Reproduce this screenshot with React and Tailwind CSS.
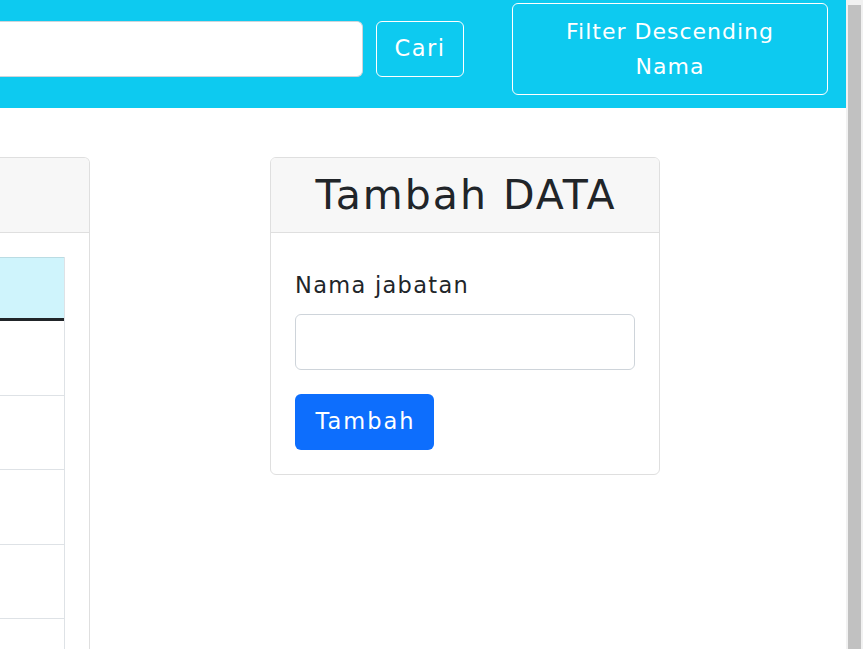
export default function App() {
  const rows = [0, 1, 2, 3];
  return (
    <div className="flex w-[863px] h-[649px] overflow-hidden bg-white text-[#212529]" style={{ fontFamily: '"DejaVu Sans", sans-serif' }}>
      <div className="w-[846px] h-[649px] flex flex-col overflow-hidden">
        {/* navbar */}
        <nav className="h-[108px] shrink-0 bg-[#0dcaf0] flex items-center pb-[11px]">
          <div className="w-[363px] h-[56px] bg-white border border-l-0 border-[#ced4da] rounded-r-[6px]"></div>
          <button className="ml-[13px] w-[88px] h-[56px] border border-white rounded-[6px] text-white text-[22.5px] tracking-[1.5px]">Cari</button>
          <button className="ml-[48px] w-[316px] h-[92px] border border-white rounded-[6px] text-white text-[22px] leading-[35px] tracking-[1px] text-center">
            Filter Descending
            <br />
            Nama
          </button>
        </nav>
        {/* content */}
        <div className="flex items-start pt-[49px]">
          {/* left card (partially visible) */}
          <div className="w-[90px] h-[600px] shrink-0 border border-l-0 border-[#dfdfdf] rounded-tr-[6px] overflow-hidden">
            <div className="h-[75px] bg-[#f7f7f7] border-b border-[#dfdfdf]"></div>
            <div className="pt-[24px] pr-[25px]">
              <div className="w-[65px] border-r border-[#dee2e6]">
                <div className="h-[61px] bg-[#cff4fc] border-t border-[#badce3]"></div>
                <div className="h-[3px] bg-[#212529]"></div>
                {rows.map((r) => (
                  <div key={r} className="h-[74.5px] border-b border-[#dee2e6]"></div>
                ))}
                <div className="h-[74px]"></div>
              </div>
            </div>
          </div>
          {/* right card */}
          <div className="ml-[180px] w-[390px] border border-[#dfdfdf] rounded-[6px] overflow-hidden">
            <div className="h-[75px] bg-[#f7f7f7] border-b border-[#dfdfdf] flex items-center justify-center">
              <h1 className="text-[41px] leading-[48px] tracking-[2px] pl-[2px]">Tambah DATA</h1>
            </div>
            <div className="px-[24px] pt-[36px] pb-[24px]">
              <label className="block text-[22.5px] leading-[33px] tracking-[1.3px]">Nama jabatan</label>
              <div className="mt-[12px] h-[56px] border border-[#ced4da] rounded-[6px] bg-white"></div>
              <button className="mt-[24px] w-[139px] h-[56px] bg-[#0d6efd] rounded-[6px] text-white text-[22.5px] tracking-[2px] pl-[2px]">Tambah</button>
            </div>
          </div>
        </div>
      </div>
      {/* scrollbar */}
      <div className="w-[17px] h-[649px] shrink-0 bg-[#f1f1f1] flex flex-col">
        <div className="ml-[2px] mt-[5px] w-[13px] flex-1 bg-[#c1c1c1]"></div>
      </div>
    </div>
  );
}
